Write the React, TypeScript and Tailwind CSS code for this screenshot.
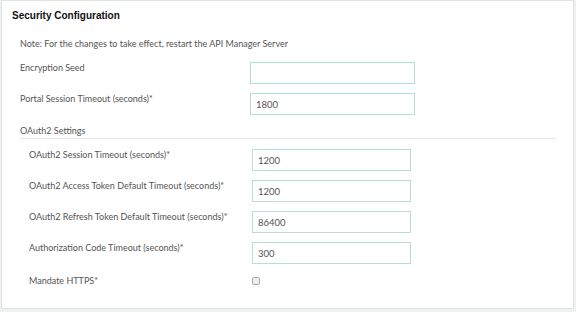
const topFields = [
  { label: 'Encryption Seed', value: '' },
  { label: 'Portal Session Timeout (seconds)*', value: '1800' }
];

const oauthFields = [
  { label: 'OAuth2 Session Timeout (seconds)*', value: '1200' },
  { label: 'OAuth2 Access Token Default Timeout (seconds)*', value: '1200' },
  { label: 'OAuth2 Refresh Token Default Timeout (seconds)*', value: '86400' },
  { label: 'Authorization Code Timeout (seconds)*', value: '300' }
];

function Field({ label, value, labelWidth, inputWidth }: { label: string; value: string; labelWidth: string; inputWidth: string }) {
  return (
    <div className="flex h-[31px] items-start">
      <label className={`${labelWidth} text-[9px] leading-[12px] text-[#555]`}>{label}</label>
      <input
        readOnly
        value={value}
        className={`${inputWidth} h-[22px] border border-[#b4dfd9] bg-white px-[5px] text-[9.5px] text-[#555] outline-none`}
      />
    </div>
  );
}

export default function App() {
  return (
    <div className="h-[312px] w-[576px] bg-[#eff1f0] pl-[1px]" style={{ fontFamily: 'Lato, "Liberation Sans", sans-serif' }}>
      <div className="h-[309px] w-[573px] border border-[#e1e3e2] bg-white">
        <h1 className="px-[10px] pt-[8px] text-[10px] font-bold leading-[14px] text-[#111]" style={{ fontFamily: '"Liberation Sans", Arial, sans-serif' }}>
          Security Configuration
        </h1>
        <div className="pl-[18px] pr-[17px]">
          <p className="mt-[14px] text-[9px] leading-[14px] text-[#555]">
            Note: For the changes to take effect, restart the API Manager Server
          </p>
          <div className="mt-[11px]">
            {topFields.map((f) => (
              <Field key={f.label} label={f.label} value={f.value} labelWidth="w-[230px]" inputWidth="w-[165px]" />
            ))}
          </div>
          <div className="border-b border-[#e6e6e6] text-[9px] leading-[14px] text-[#555]">OAuth2 Settings</div>
          <div className="mt-[10px] pl-[9px]">
            {oauthFields.map((f) => (
              <Field key={f.label} label={f.label} value={f.value} labelWidth="w-[223px]" inputWidth="w-[159px]" />
            ))}
            <div className="flex items-center pt-[1px]">
              <span className="w-[223px] text-[9px] leading-[14px] text-[#555]">Mandate HTTPS*</span>
              <input
                type="checkbox"
                className="m-0 h-[8px] w-[8px] appearance-none rounded-[2px] border border-[#a9a9a9] bg-[#eeeeee]"
              />
            </div>
          </div>
        </div>
      </div>
    </div>
  );
}
